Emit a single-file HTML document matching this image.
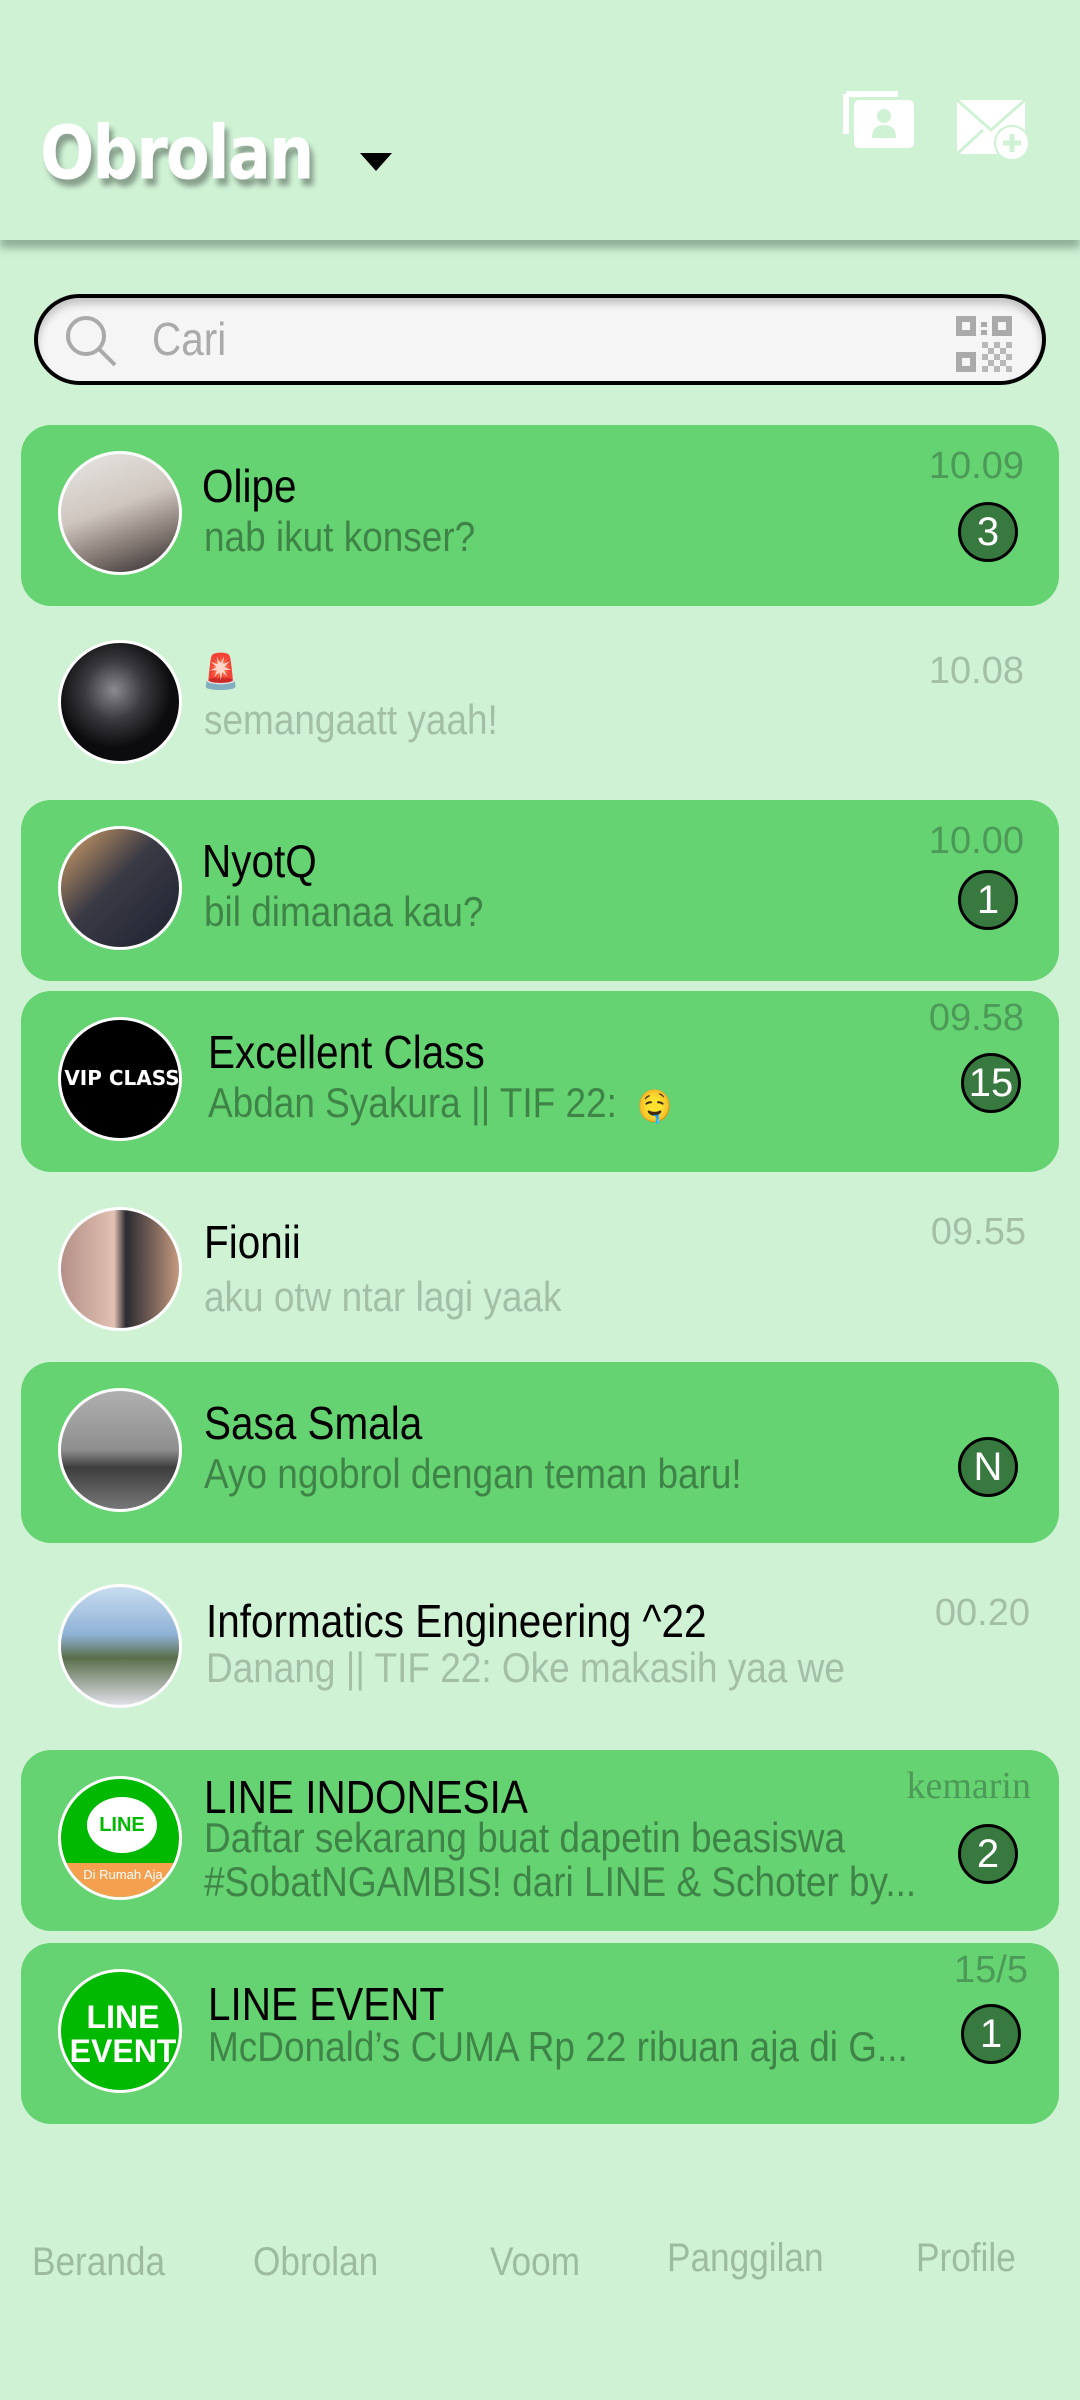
<!DOCTYPE html>
<html><head><meta charset="utf-8"><style>
*{margin:0;padding:0;box-sizing:border-box}
body{width:1080px;height:2400px;background:#cff2d5;position:relative;overflow:hidden;font-family:"Liberation Sans",sans-serif}
.hdr{position:absolute;left:0;top:0;width:1080px;height:240px;background:#cff2d5;box-shadow:0 8px 8px rgba(90,120,95,.55)}
.title{position:absolute;left:40px;top:112px;font:bold 64px "DejaVu Sans","Liberation Sans",sans-serif;color:#fff;text-shadow:4px 6px 5px rgba(0,0,0,.35);letter-spacing:-2px;transform:scaleY(1.15);transform-origin:left top}
.search{position:absolute;left:34px;top:294px;width:1012px;height:91px;border:4px solid #000;border-radius:46px;background:#f5f5f5;box-shadow:inset 0 6px 8px rgba(0,0,0,.2)}
.cari{position:absolute;left:114px;top:14px;font-size:46px;color:#aaa;transform:scaleX(.88);transform-origin:left}
.row{position:absolute;left:21px;width:1038px;height:181px;border-radius:30px}
.g{background:#66d372}
.av{position:absolute;left:37px;top:26px;width:124px;height:124px;border-radius:50%;border:3px solid #fff;overflow:hidden}
.nm,.pv{transform:scaleX(.88);transform-origin:left top;white-space:nowrap}
.nm{position:absolute;left:181px;top:34px;font-size:46px;color:#000}
.pv{position:absolute;left:183px;top:88px;font-size:42px;color:#3f8447}
.l .pv{color:#a3bfa6}
.tm{position:absolute;right:35px;top:20px;font-size:38px;color:#4c9a57}
.l .tm{color:#a3bfa6}
.bd{position:absolute;left:937px;width:60px;height:60px;border-radius:50%;background:#37793f;border:3px solid #000;color:#fff;font-size:40px;text-align:center;line-height:54px}
.nav{position:absolute;top:2240px;font-size:40px;color:#9dbb9f;transform:scaleX(.88);transform-origin:left}
</style></head><body>
<div class="hdr">
<div class="title">Obrolan</div>
<svg style="position:absolute;left:360px;top:153px" width="32" height="20"><polygon points="0,0 32,0 16,18" fill="#000"/></svg>
<svg style="position:absolute;left:842px;top:90px" width="74" height="60" viewBox="0 0 74 60"><path d="M4 4h52M4 4v40" stroke="#fff" stroke-width="6" fill="none"/><rect x="12" y="10" width="60" height="48" rx="5" fill="#fff"/><circle cx="42" cy="26" r="7" fill="#cff2d5"/><path d="M30 48q0-13 12-13t12 13z" fill="#cff2d5"/></svg>
<svg style="position:absolute;left:955px;top:98px" width="76" height="64" viewBox="0 0 76 64"><rect x="2" y="2" width="68" height="54" fill="#fff"/><path d="M2 2l34 30 34-30M2 56l26-24M70 56L44 32" stroke="#cff2d5" stroke-width="3" fill="none"/><circle cx="57" cy="45" r="17" fill="#fff" stroke="#cff2d5" stroke-width="2"/><path d="M57 36v18M48 45h18" stroke="#cff2d5" stroke-width="5"/></svg>
</div>
<div class="search">
<svg style="position:absolute;left:26px;top:16px" width="56" height="56"><circle cx="22" cy="22" r="18" stroke="#aaa" stroke-width="4" fill="none"/><path d="M35 35l16 16" stroke="#aaa" stroke-width="4"/></svg>
<div class="cari">Cari</div>
<svg style="position:absolute;left:916px;top:16px" width="60" height="60" viewBox="0 0 60 60" fill="#aaa"><path d="M2 2h20v20H2zM8 8v8h8V8zM38 2h20v20H38zM44 8v8h8V8zM2 38h20v20H2zM8 44v8h8v-8z" fill-rule="evenodd"/><rect x="27" y="8" width="6" height="5"/><rect x="27" y="16" width="6" height="5"/><g opacity=".8"><rect x="28" y="28" width="6" height="6"/><rect x="40" y="28" width="6" height="6"/><rect x="52" y="28" width="6" height="6"/><rect x="34" y="34" width="6" height="6"/><rect x="46" y="34" width="6" height="6"/><rect x="28" y="40" width="6" height="6"/><rect x="40" y="40" width="6" height="6"/><rect x="52" y="40" width="6" height="6"/><rect x="34" y="46" width="6" height="6"/><rect x="46" y="46" width="6" height="6"/><rect x="28" y="52" width="6" height="6"/><rect x="40" y="52" width="6" height="6"/><rect x="52" y="52" width="6" height="6"/></g></svg>
</div>

<div class="row g" style="top:425px"><div class="av" style="background:linear-gradient(160deg,#e8e6e3,#cfc6bf 45%,#8a7e78 70%,#2e2a2c)"></div><div class="nm">Olipe</div><div class="pv">nab ikut konser?</div><div class="tm">10.09</div><div class="bd" style="top:77px">3</div></div>

<div class="row l" style="top:614px"><div class="av" style="background:radial-gradient(circle at 45% 40%,#8a8a90 0,#3b3b40 30%,#0c0c0e 60%)"></div><div class="nm" style="top:38px;font-size:34px">🚨</div><div class="pv" style="top:82px">semangaatt yaah!</div><div class="tm" style="top:36px">10.08</div></div>

<div class="row g" style="top:800px"><div class="av" style="background:linear-gradient(135deg,#d8a46a,#3a3a45 45%,#1e2230)"></div><div class="nm">NyotQ</div><div class="pv">bil dimanaa kau?</div><div class="tm">10.00</div><div class="bd" style="top:70px">1</div></div>

<div class="row g" style="top:991px"><div class="av" style="background:#000"><div style="position:absolute;left:-4px;top:46px;width:130px;text-align:center;color:#fff;font:bold 20px 'DejaVu Sans',sans-serif">VIP CLASS</div></div><div class="nm" style="left:187px">Excellent Class</div><div class="pv" style="left:187px">Abdan Syakura || TIF 22: &nbsp;<span style="font-size:32px">🤤</span></div><div class="tm" style="top:6px">09.58</div><div class="bd" style="top:62px;left:940px">15</div></div>

<div class="row l" style="top:1181px"><div class="av" style="background:linear-gradient(90deg,#b49088,#e2c0b2 45%,#2a2a30 55%,#c59a80)"></div><div class="nm" style="left:183px">Fionii</div><div class="pv" style="top:92px">aku otw ntar lagi yaak</div><div class="tm" style="top:30px;right:33px">09.55</div></div>

<div class="row g" style="top:1362px"><div class="av" style="background:linear-gradient(180deg,#b0b0b0,#8e8e8e 50%,#3d3d3d 65%,#777)"></div><div class="nm" style="left:183px">Sasa Smala</div><div class="pv">Ayo ngobrol dengan teman baru!</div><div class="bd" style="top:75px">N</div></div>

<div class="row l" style="top:1558px"><div class="av" style="background:linear-gradient(180deg,#c8dcef,#8fb2d6 40%,#5a6f4c 60%,#e0e0e8)"></div><div class="nm" style="left:185px;top:36px">Informatics Engineering ^22</div><div class="pv" style="left:185px;top:86px">Danang || TIF 22: Oke makasih yaa we</div><div class="tm" style="right:29px;top:34px">00.20</div></div>

<div class="row g" style="top:1750px"><div class="av" style="background:#00b900"><div style="position:absolute;left:0;top:84px;width:124px;height:40px;background:#f4a04e"></div><div style="position:absolute;left:26px;top:18px;width:70px;height:56px;background:#fff;border-radius:50%;color:#00b900;font:bold 20px sans-serif;text-align:center;line-height:56px">LINE</div><div style="position:absolute;left:0;top:88px;width:124px;text-align:center;color:#fff;font-size:13px">Di Rumah Aja</div></div><div class="nm" style="left:183px;top:20px">LINE INDONESIA</div><div class="pv" style="top:66px;line-height:44px">Daftar sekarang buat dapetin beasiswa<br>#SobatNGAMBIS! dari LINE &amp; Schoter by...</div><div class="tm" style="top:14px;right:28px;font-family:'Liberation Serif',serif">kemarin</div><div class="bd" style="top:74px">2</div></div>

<div class="row g" style="top:1943px"><div class="av" style="background:#00b900"><div style="position:absolute;left:0;top:28px;width:124px;text-align:center;color:#fff;font:bold 32px/34px sans-serif">LINE<br>EVENT</div></div><div class="nm" style="left:187px">LINE EVENT</div><div class="pv" style="left:187px;top:80px">McDonald’s CUMA Rp 22 ribuan aja di G...</div><div class="tm" style="top:6px;right:31px">15/5</div><div class="bd" style="top:61px;left:940px">1</div></div>

<div class="nav" style="left:32px">Beranda</div>
<div class="nav" style="left:253px">Obrolan</div>
<div class="nav" style="left:490px">Voom</div>
<div class="nav" style="left:667px;top:2236px">Panggilan</div>
<div class="nav" style="left:916px;top:2236px">Profile</div>
</body></html>
